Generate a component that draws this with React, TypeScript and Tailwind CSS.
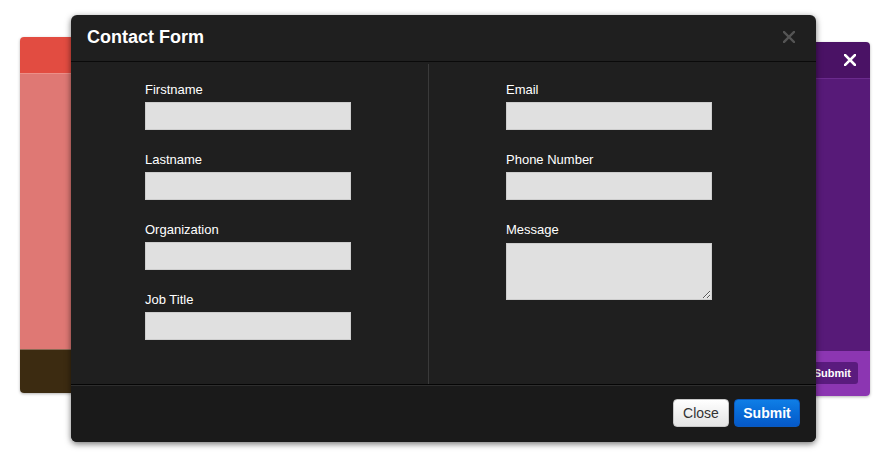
import React from "react";

const leftFields = ["Firstname", "Lastname", "Organization", "Job Title"];
const rightFields = ["Email", "Phone Number"];

const Field = ({ label }: { label: string }) => (
  <div className="h-[70px]">
    <label className="block text-[13px] leading-[16px] text-white">{label}</label>
    <input
      type="text"
      className="mt-[4px] block w-[206px] h-[28px] bg-[#e0e0e0] border border-[#cdcdcd] outline-none"
    />
  </div>
);

const CloseIcon = ({ color, width }: { color: string; width: number }) => (
  <svg width="12" height="12" viewBox="0 0 12 12">
    <path d="M1 1 L11 11 M11 1 L1 11" stroke={color} strokeWidth={width} strokeLinecap="square" />
  </svg>
);

export default function App() {
  return (
    <div
      className="relative w-[888px] h-[467px] bg-white overflow-hidden"
      style={{ fontFamily: '"Liberation Sans", Arial, sans-serif' }}
    >
      {/* red modal behind, left */}
      <div className="absolute left-[20px] top-[37px] w-[480px] h-[356px] flex flex-col rounded-[4px] overflow-hidden shadow-[0_1px_3px_rgba(0,0,0,0.3)]">
        <div className="h-[36px] bg-[#e24c41]" />
        <div className="h-[1px] bg-[#ec8f88]" />
        <div className="flex-1 bg-[#df7874]" />
        <div className="h-[1px] bg-[#8a6a55]" />
        <div className="h-[43px] bg-[#3c2b11]" />
      </div>

      {/* purple modal behind, right */}
      <div className="absolute left-[400px] top-[42px] w-[470px] h-[354px] flex flex-col rounded-[4px] overflow-hidden shadow-[0_1px_3px_rgba(0,0,0,0.3)]">
        <div className="h-[36px] bg-[#4a1265] flex items-center justify-end pr-[14px]">
          <CloseIcon color="#ffffff" width={2.6} />
        </div>
        <div className="h-[1px] bg-[#6b2a8d]" />
        <div className="flex-1 bg-[#571a78]" />
        <div className="h-[45px] bg-[#8c36b2] flex items-start justify-end pr-[12px] pt-[11px]">
          <button className="h-[22px] px-[7px] rounded-[3px] bg-[#5a1b7e] text-white text-[11px] font-bold">
            Submit
          </button>
        </div>
      </div>

      {/* main modal */}
      <div className="absolute left-[71px] top-[15px] w-[745px] h-[427px] flex flex-col rounded-[6px] overflow-hidden bg-[#1f1f1f] shadow-[0_2px_6px_rgba(0,0,0,0.55)]">
        <div className="h-[47px] flex items-center justify-between pl-[16px] pr-[21px] pb-[2px] border-b border-[#0a0a0a]">
          <h2 className="text-[18px] font-bold text-white">Contact Form</h2>
          <CloseIcon color="#545454" width={2.4} />
        </div>

        <div className="flex-1 grid grid-cols-[358px_1fr]">
          <div className="border-r border-[#3a3a3a] pl-[74px] pt-[18px] mt-[2px]">
            {leftFields.map((f) => (
              <Field key={f} label={f} />
            ))}
          </div>
          <div className="pl-[77px] pt-[20px]">
            {rightFields.map((f) => (
              <Field key={f} label={f} />
            ))}
            <label className="block text-[13px] leading-[16px] text-white">Message</label>
            <textarea className="mt-[5px] block w-[206px] h-[57px] bg-[#e0e0e0] border border-[#cdcdcd] outline-none resize" />
          </div>
        </div>

        <div className="h-[58px] bg-[#1a1a1a] border-t border-[#050505] shadow-[inset_0_1px_0_#2e2e2e] flex items-start justify-end gap-[5px] pr-[16px] pt-[14px]">
          <button className="w-[56px] h-[28px] rounded-[4px] border border-[#c8c8c8] bg-gradient-to-b from-[#ffffff] to-[#e4e4e4] text-[14px] text-[#333]">
            Close
          </button>
          <button className="w-[66px] h-[28px] rounded-[4px] border border-[#0a5ac0] bg-gradient-to-b from-[#0f7ee6] to-[#0558c8] text-[14px] font-bold text-white">
            Submit
          </button>
        </div>
      </div>
    </div>
  );
}
